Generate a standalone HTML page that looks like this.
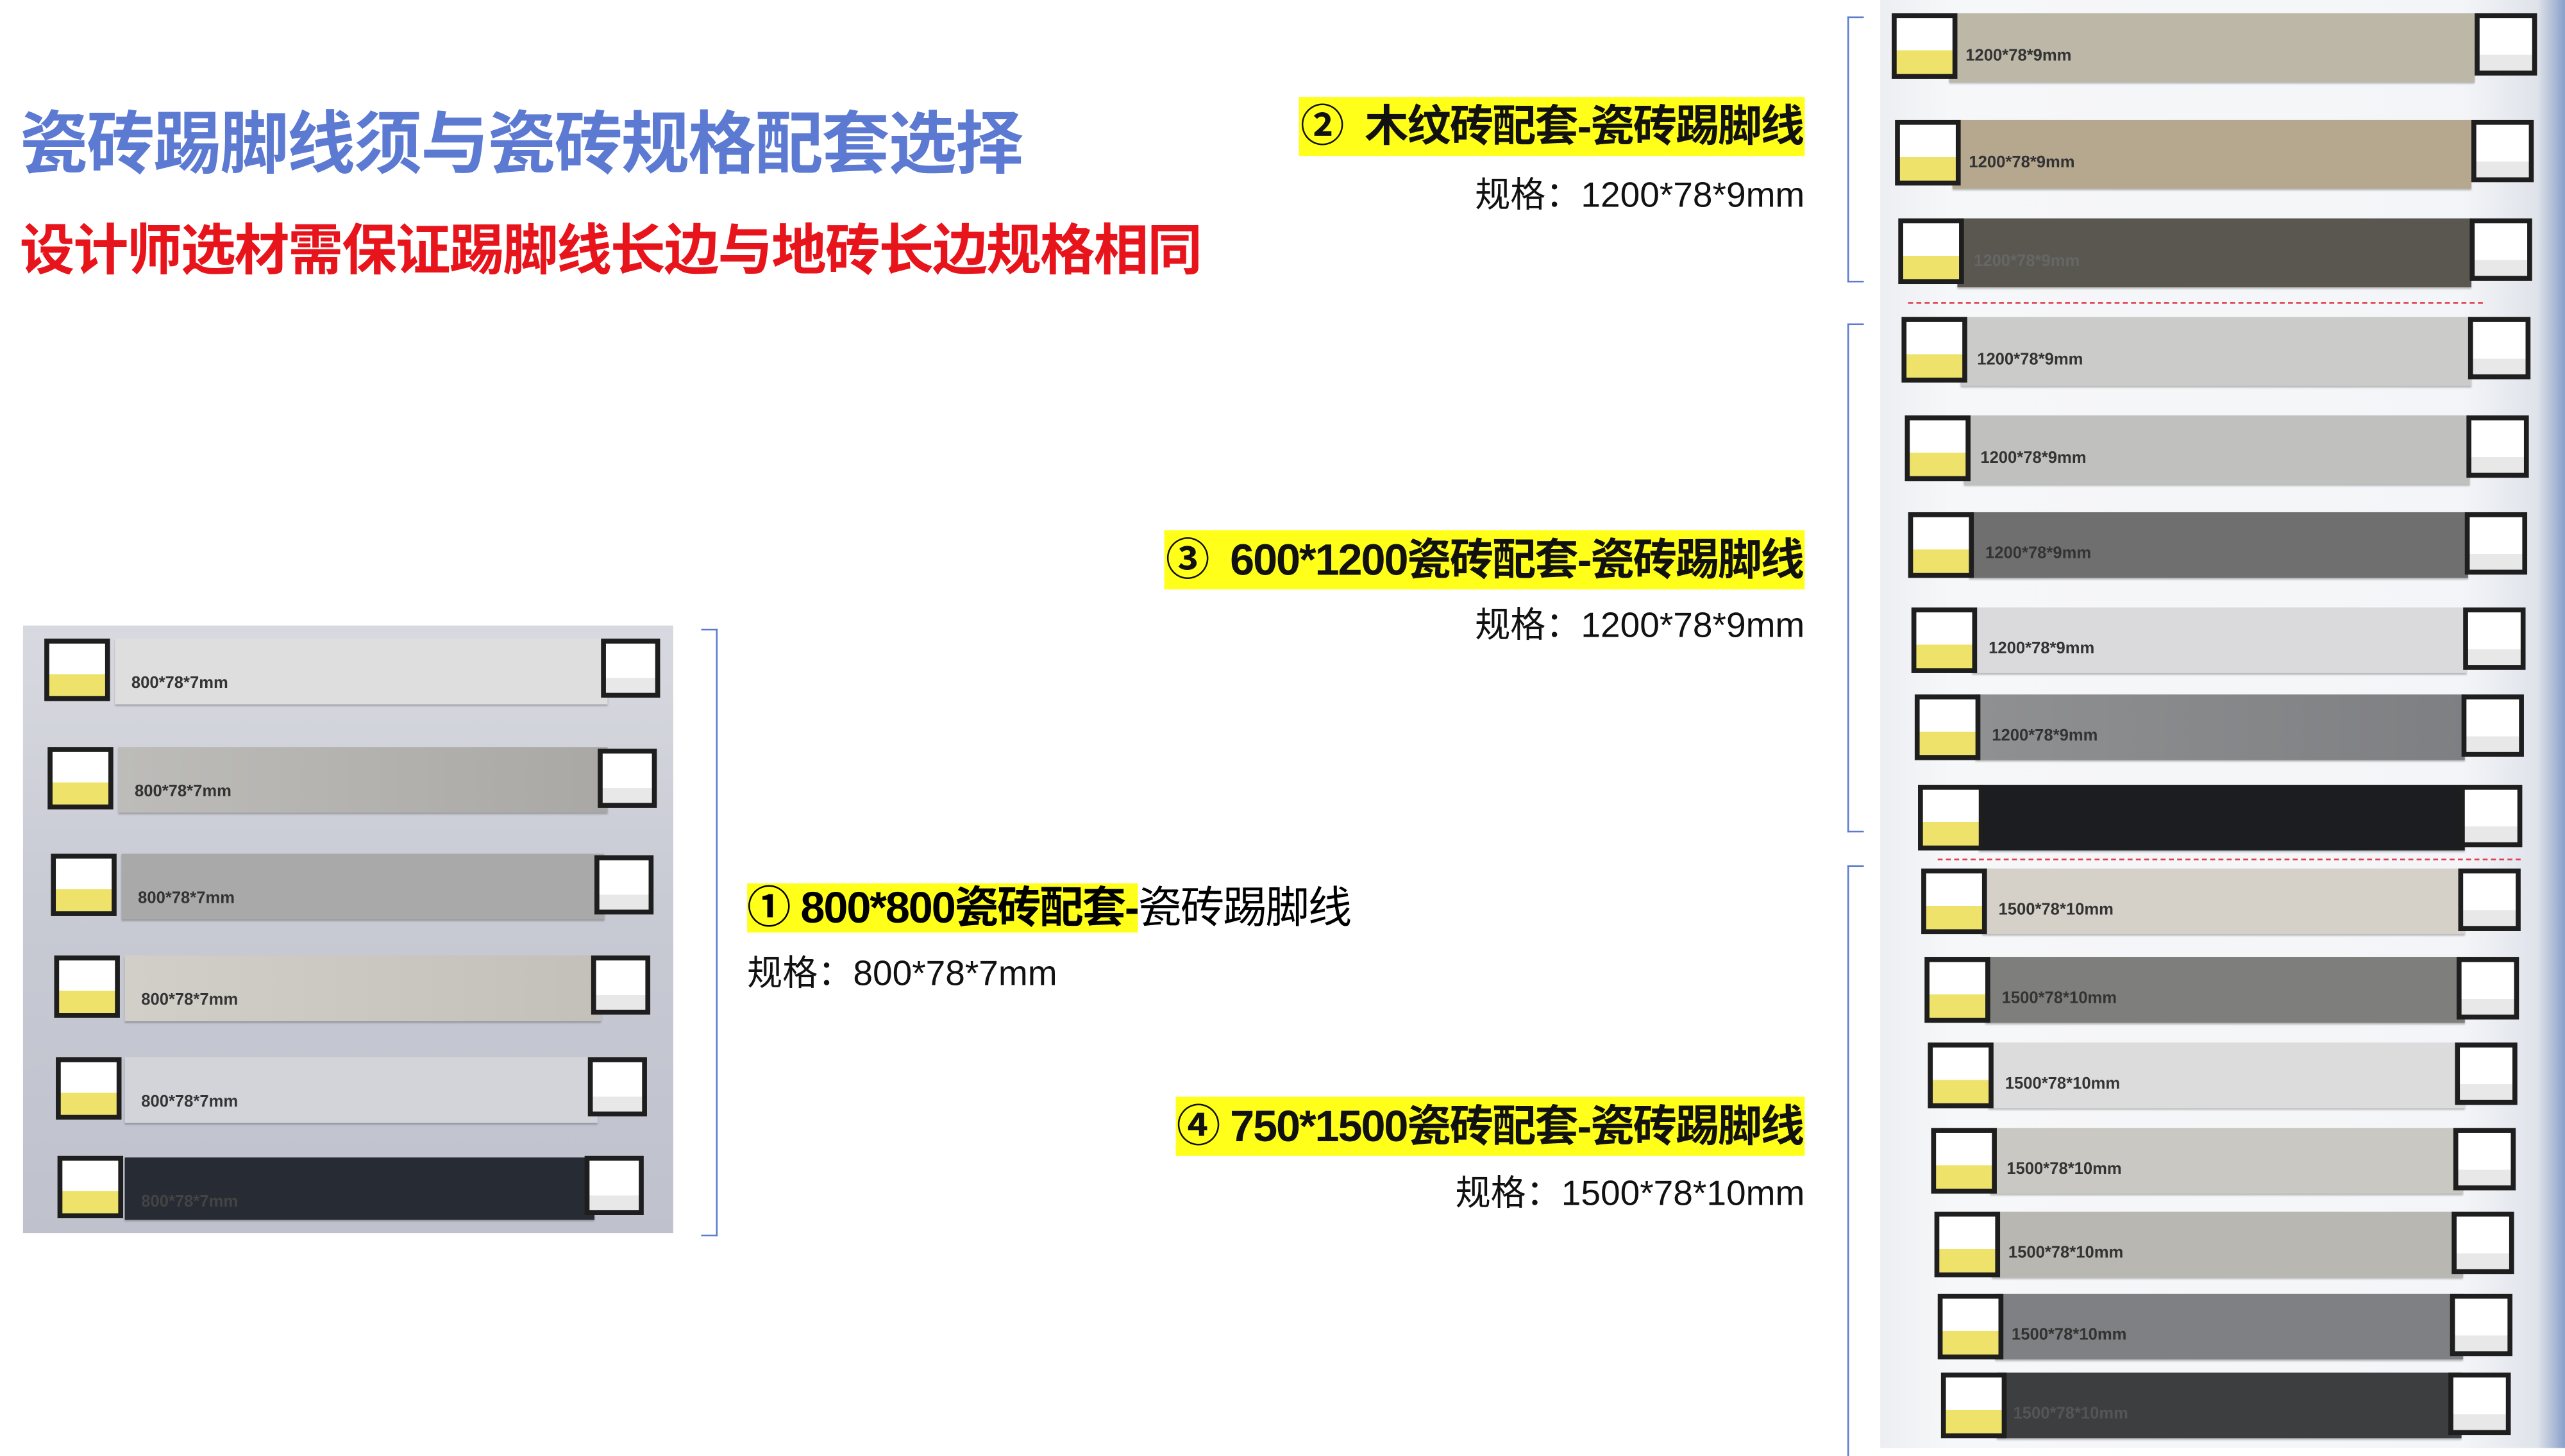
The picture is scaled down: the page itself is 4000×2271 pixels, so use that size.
<!DOCTYPE html>
<html><head><meta charset="utf-8"><style>
*{margin:0;padding:0;box-sizing:border-box}
body{width:4000px;height:2250px;overflow:hidden;background:#fff}
#s{position:absolute;left:0;top:0;width:1562px;height:879px;transform:scale(2.5608);transform-origin:0 0;font-family:"Liberation Sans","Noto Sans CJK SC",sans-serif}
.a{position:absolute}
.t1{left:12px;top:54px;font-size:41.5px;font-weight:bold;color:#5c7ad2;white-space:nowrap;letter-spacing:-0.8px}
.t2{left:12px;top:125px;font-size:33.5px;font-weight:bold;color:#e8141c;white-space:nowrap;letter-spacing:-0.8px}
.hl{background:#ffff1a;font-weight:bold;font-size:26.7px;line-height:36px;white-space:nowrap;color:#111;padding:0 1px;letter-spacing:-0.8px}
.sp{font-size:21.5px;white-space:nowrap;color:#111}
.br{border:1.3px solid #5b7bd0}
.lb{position:absolute;background:#1e1e1e;padding:3px}
.lb i{display:block;width:100%;height:100%;background:linear-gradient(#fff 0 58%,#efe26a 58% 100%)}
.rb i{background:linear-gradient(#fff 0 70%,#e8e8e8 70% 100%)}
.st{position:absolute;box-shadow:0 1px 1px rgba(0,0,0,.25)}
.st b{position:absolute;left:10px;top:50%;font-size:10px;color:#333;font-family:"Liberation Sans",sans-serif}
</style></head><body><div id="s">
<div class="a t1">瓷砖踢脚线须与瓷砖规格配套选择</div>
<div class="a t2">设计师选材需保证踢脚线长边与地砖长边规格相同</div>

<div class="a hl" style="right:463px;top:59px">② &nbsp;木纹砖配套-瓷砖踢脚线</div>
<div class="a sp" style="right:463px;top:102px">规格：1200*78*9mm</div>
<div class="a hl" style="right:463px;top:323px">③ &nbsp;600*1200瓷砖配套-瓷砖踢脚线</div>
<div class="a sp" style="right:463px;top:364px">规格：1200*78*9mm</div>
<div class="a hl" style="right:463px;top:668px">④ 750*1500瓷砖配套-瓷砖踢脚线</div>
<div class="a sp" style="right:463px;top:710px">规格：1500*78*10mm</div>
<div class="a" style="left:455px;top:535px;font-size:26.7px;line-height:36px;white-space:nowrap;letter-spacing:-0.8px"><span style="background:#ffff1a;font-weight:bold">① 800*800瓷砖配套-</span>瓷砖踢脚线</div>
<div class="a sp" style="left:455px;top:576px">规格：800*78*7mm</div>

<div class="a br" style="left:427px;top:383px;width:10px;height:370px;border-left:none"></div>
<div class="a br" style="left:1125px;top:10px;width:10px;height:162px;border-right:none"></div>
<div class="a br" style="left:1125px;top:197px;width:10px;height:310px;border-right:none"></div>
<div class="a br" style="left:1125px;top:527px;width:10px;height:360px;border-right:none;border-bottom:none"></div>

<div class="a" style="left:14px;top:381px;width:396px;height:370px;background:linear-gradient(180deg,#d8d9e0,#c7c9d3 50%,#bfc2cd);overflow:hidden">
<div class="st" style="left:56px;top:8px;width:300px;height:40px;background:#dedede"><b style="top:22px">800*78*7mm</b></div>
<div class="st" style="left:58px;top:74px;width:298px;height:40px;background:linear-gradient(90deg,#bdbcb9,#a9a8a5)"><b style="top:22px">800*78*7mm</b></div>
<div class="st" style="left:60px;top:139px;width:294px;height:40px;background:#a9a9aa"><b style="top:22px">800*78*7mm</b></div>
<div class="st" style="left:62px;top:201px;width:290px;height:40px;background:linear-gradient(90deg,#d2cfc8,#c3c0b9)"><b style="top:22px">800*78*7mm</b></div>
<div class="st" style="left:62px;top:263px;width:288px;height:40px;background:#d3d4da"><b style="top:22px">800*78*7mm</b></div>
<div class="st" style="left:62px;top:324px;width:286px;height:38px;background:#272b33"><b style="top:22px;color:#444">800*78*7mm</b></div>
<div class="lb" style="left:13px;top:8px;width:40px;height:38px"><i></i></div>
<div class="lb" style="left:15px;top:74px;width:40px;height:38px"><i></i></div>
<div class="lb" style="left:17px;top:139px;width:40px;height:38px"><i></i></div>
<div class="lb" style="left:19px;top:201px;width:40px;height:38px"><i></i></div>
<div class="lb" style="left:20px;top:263px;width:40px;height:38px"><i></i></div>
<div class="lb" style="left:21px;top:323px;width:40px;height:38px"><i></i></div>
<div class="lb rb" style="left:352px;top:8px;width:36px;height:36px"><i></i></div>
<div class="lb rb" style="left:350px;top:75px;width:36px;height:36px"><i></i></div>
<div class="lb rb" style="left:348px;top:140px;width:36px;height:36px"><i></i></div>
<div class="lb rb" style="left:346px;top:201px;width:36px;height:36px"><i></i></div>
<div class="lb rb" style="left:344px;top:263px;width:36px;height:36px"><i></i></div>
<div class="lb rb" style="left:342px;top:323px;width:36px;height:36px"><i></i></div>
</div>

<div class="a" style="left:1145px;top:0;width:417px;height:882px;background:linear-gradient(90deg,#eceef2,#f6f7f9 10%,#f4f5f8 85%,#dfe3ea 96%,#8aa0c8);overflow:hidden">
<div class="a" style="left:17px;top:184px;width:350px;border-top:1.5px dashed #e04050"></div>
<div class="a" style="left:35px;top:523px;width:355px;border-top:1.5px dashed #e04050"></div>
<div class="st" style="left:42px;top:8px;width:320px;height:42px;background:#bdb7a8"><b>1200*78*9mm</b></div>
<div class="st" style="left:44px;top:73px;width:316px;height:42px;background:#b5a88f"><b>1200*78*9mm</b></div>
<div class="st" style="left:47px;top:133px;width:313px;height:42px;background:#5a5751"><b style="color:#666">1200*78*9mm</b></div>
<div class="st" style="left:49px;top:193px;width:311px;height:42px;background:#cbcbc9"><b>1200*78*9mm</b></div>
<div class="st" style="left:51px;top:253px;width:308px;height:42px;background:#c0c0be"><b>1200*78*9mm</b></div>
<div class="st" style="left:54px;top:312px;width:304px;height:40px;background:#6f6f6f"><b style="color:#333">1200*78*9mm</b></div>
<div class="st" style="left:56px;top:370px;width:301px;height:40px;background:#dadadc"><b>1200*78*9mm</b></div>
<div class="st" style="left:58px;top:423px;width:298px;height:40px;background:linear-gradient(90deg,#8f9092,#7e7f82)"><b>1200*78*9mm</b></div>
<div class="st" style="left:60px;top:478px;width:296px;height:40px;background:#1c1d20"></div>
<div class="st" style="left:62px;top:529px;width:294px;height:40px;background:#d5d1c9"><b>1500*78*10mm</b></div>
<div class="st" style="left:64px;top:583px;width:292px;height:40px;background:#7e7e7c"><b>1500*78*10mm</b></div>
<div class="st" style="left:66px;top:635px;width:290px;height:40px;background:#dcdcdd"><b>1500*78*10mm</b></div>
<div class="st" style="left:67px;top:687px;width:288px;height:40px;background:#cac8c3"><b>1500*78*10mm</b></div>
<div class="st" style="left:68px;top:738px;width:287px;height:40px;background:#b9b7b1"><b>1500*78*10mm</b></div>
<div class="st" style="left:70px;top:788px;width:285px;height:40px;background:#7f8083"><b>1500*78*10mm</b></div>
<div class="st" style="left:71px;top:836px;width:283px;height:40px;background:#3d3e40"><b style="color:#555">1500*78*10mm</b></div>
<div class="lb" style="left:7px;top:8px;width:40px;height:40px"><i></i></div>
<div class="lb" style="left:9px;top:73px;width:40px;height:40px"><i></i></div>
<div class="lb" style="left:11px;top:133px;width:40px;height:40px"><i></i></div>
<div class="lb" style="left:13px;top:193px;width:40px;height:40px"><i></i></div>
<div class="lb" style="left:15px;top:253px;width:40px;height:40px"><i></i></div>
<div class="lb" style="left:17px;top:312px;width:40px;height:40px"><i></i></div>
<div class="lb" style="left:19px;top:370px;width:40px;height:40px"><i></i></div>
<div class="lb" style="left:21px;top:423px;width:40px;height:40px"><i></i></div>
<div class="lb" style="left:23px;top:478px;width:40px;height:40px"><i></i></div>
<div class="lb" style="left:25px;top:529px;width:40px;height:40px"><i></i></div>
<div class="lb" style="left:27px;top:583px;width:40px;height:40px"><i></i></div>
<div class="lb" style="left:29px;top:635px;width:40px;height:40px"><i></i></div>
<div class="lb" style="left:31px;top:687px;width:40px;height:40px"><i></i></div>
<div class="lb" style="left:33px;top:738px;width:40px;height:40px"><i></i></div>
<div class="lb" style="left:35px;top:788px;width:40px;height:40px"><i></i></div>
<div class="lb" style="left:37px;top:836px;width:40px;height:40px"><i></i></div>
<div class="lb rb" style="left:362px;top:8px;width:38px;height:38px"><i></i></div>
<div class="lb rb" style="left:360px;top:73px;width:38px;height:38px"><i></i></div>
<div class="lb rb" style="left:359px;top:133px;width:38px;height:38px"><i></i></div>
<div class="lb rb" style="left:358px;top:193px;width:38px;height:38px"><i></i></div>
<div class="lb rb" style="left:357px;top:253px;width:38px;height:38px"><i></i></div>
<div class="lb rb" style="left:356px;top:312px;width:38px;height:38px"><i></i></div>
<div class="lb rb" style="left:355px;top:370px;width:38px;height:38px"><i></i></div>
<div class="lb rb" style="left:354px;top:423px;width:38px;height:38px"><i></i></div>
<div class="lb rb" style="left:353px;top:478px;width:38px;height:38px"><i></i></div>
<div class="lb rb" style="left:352px;top:529px;width:38px;height:38px"><i></i></div>
<div class="lb rb" style="left:351px;top:583px;width:38px;height:38px"><i></i></div>
<div class="lb rb" style="left:350px;top:635px;width:38px;height:38px"><i></i></div>
<div class="lb rb" style="left:349px;top:687px;width:38px;height:38px"><i></i></div>
<div class="lb rb" style="left:348px;top:738px;width:38px;height:38px"><i></i></div>
<div class="lb rb" style="left:347px;top:788px;width:38px;height:38px"><i></i></div>
<div class="lb rb" style="left:346px;top:836px;width:38px;height:38px"><i></i></div>
</div>
</div></body></html>
